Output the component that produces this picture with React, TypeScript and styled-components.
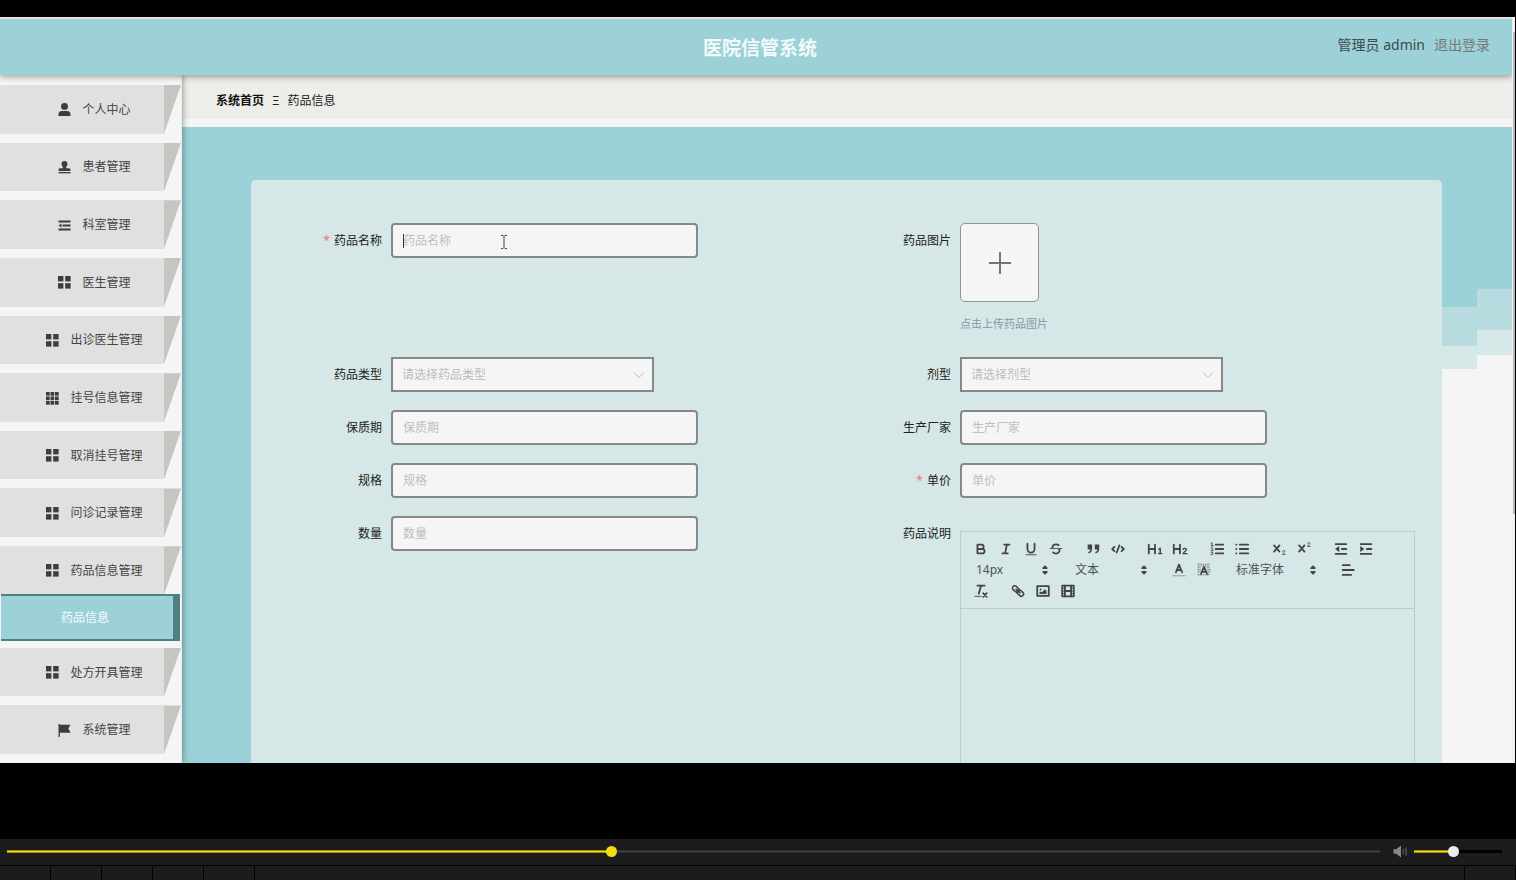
import React from "react";
import styled, { createGlobalStyle } from "styled-components";

const GlobalStyle = createGlobalStyle`
  *, *::before, *::after { box-sizing: border-box; }
  body {
    margin: 0;
    background: #000;
    font-family: "Noto Sans", "Noto Sans CJK SC", sans-serif;
    font-size: 12px;
    line-height: 16px;
    color: #333;
  }
  button, input, select { font: inherit; color: inherit; margin: 0; }
  ul, ol { list-style: none; margin: 0; padding: 0; }
  a { text-decoration: none; }
`;

const Player = styled.div`
  display: flex;
  flex-direction: column;
  height: 100vh;
  padding-top: 17px;
`;

const Screen = styled.div`
  flex: 1;
  min-height: 0;
  display: flex;
  padding-right: 1px;
`;

const Page = styled.div`
  flex: 1;
  min-width: 0;
  display: flex;
  flex-direction: column;
  overflow: hidden;
  background: #f5f5f5;
`;

const ScrollTrack = styled.div`
  width: 3px;
  padding: 15px 0 0 1px;
  background: #f1f1f1;
`;

const ScrollThumb = styled.div`
  height: 66%;
  background: #b9b9b9;
`;

const Header = styled.header`
  position: relative;
  z-index: 2;
  flex: none;
  display: grid;
  grid-template-columns: 1fr auto 1fr;
  height: 58px;
  padding: 0 22px 0 30px;
  border-top: 2px solid #dfe3e3;
  background: #9cd1d7;
  box-shadow: 0 2px 6px rgba(0, 0, 0, 0.35);
`;

const Title = styled.h1`
  grid-column: 2;
  margin: 0;
  font-size: 19px;
  line-height: 58px;
  font-weight: 700;
  color: #f3fafa;
`;

const Account = styled.div`
  display: flex;
  justify-content: flex-end;
  gap: 9px;
  font-size: 14px;
  line-height: 52px;
  color: #3d4a4c;
`;

const Logout = styled.a`
  color: #74797a;
`;

const Body = styled.div`
  flex: 1;
  min-height: 0;
  display: flex;
`;

const Sidebar = styled.nav`
  position: relative;
  z-index: 1;
  flex: none;
  width: 182px;
  background: #f5f5f5;
  border-right: 1px solid #e6eeee;
  box-shadow: 1px 0 6px rgba(0, 0, 0, 0.35);
`;

const Menu = styled.ul`
  display: flex;
  flex-direction: column;
  height: 100%;
  padding-top: 10px;
`;

const MenuSlot = styled.li`
  flex: 1;
  display: flex;
  padding-bottom: 9px;
`;

const MenuLink = styled.a`
  flex: 1;
  display: flex;
  align-items: center;
  justify-content: center;
  gap: 11px;
  padding: 1px 0 0 25px;
  background: #e0e0e0;
  color: #444;

  svg { width: 13px; height: 13px; fill: #3b3d40; }
`;

const Fold = styled.span`
  width: 17px;
  background: #c5c5c1;
  clip-path: polygon(0 0, 100% 0, 0 100%);
`;

const SubSlot = styled.li`
  position: relative;
  flex: none;
  height: 47px;
  margin: -10px 1px 7px;
`;

const SubLink = styled.a`
  display: block;
  border: solid #508085;
  border-width: 2px 7px 2px 0;
  background: #9cd1d7;
  color: #f4fbfb;
  line-height: 43px;
  text-align: center;
  padding-right: 4px;
`;

const Main = styled.main`
  flex: 1;
  min-width: 0;
  display: flex;
  flex-direction: column;
`;

const Crumbs = styled.nav`
  flex: none;
  display: flex;
  align-items: center;
  gap: 8px;
  height: 43px;
  padding: 10px 34px 0;
  background: #edede9;
  border-bottom: 1px solid #e6e6e4;
  color: #222;
`;

const Home = styled.a`
  font-weight: 700;
  color: #111;
`;

const Stage = styled.div`
  flex: 1;
  min-height: 0;
  display: flex;
  margin-top: 9px;
  overflow: hidden;
  background: #9bd1d9;
`;

const Card = styled.form`
  flex: 1;
  min-width: 0;
  margin: 53px 0 0 69px;
  padding: 43px 27px 0 26px;
  border-radius: 5px 5px 0 0;
  background: #d5e7e6;
`;

const Stairs = styled.div`
  flex: none;
  display: flex;
  width: 70px;
`;

const Stair = styled.div<{ $from: number; $mid: number; $to: number }>`
  flex: 1;
  background: linear-gradient(
    #9bd1d9 ${(p) => p.$from}px,
    #b7dbde ${(p) => p.$from}px ${(p) => p.$mid}px,
    #d6e8e7 ${(p) => p.$mid}px ${(p) => p.$to}px,
    #f5f5f5 ${(p) => p.$to}px
  );
`;

const Fields = styled.div`
  display: grid;
  grid-template-columns: 1fr 1fr;
  gap: 18px 0;
`;

const Field = styled.div`
  display: flex;
  align-items: flex-start;
  min-width: 0;
`;

const Label = styled.label<{ $required?: boolean }>`
  flex: none;
  width: 114px;
  padding-right: 9px;
  line-height: 35px;
  text-align: right;
  color: #222;

  &::before {
    content: "${(p) => (p.$required ? "*" : "")}";
    margin-right: 4px;
    color: #f0746e;
  }
`;

const Control = styled.div`
  position: relative;
`;

const TextInput = styled.input`
  display: block;
  width: 307px;
  height: 35px;
  padding: 0 10px 1px;
  border: 2px solid #858888;
  border-radius: 4px;
  outline: none;
  background: #f5f5f5;
  color: #444;

  &::placeholder { color: #bcbfc4; opacity: 1; }
`;

const Select = styled.select`
  display: block;
  width: 263px;
  height: 35px;
  padding: 1px 9px 0;
  border: 2px solid #858888;
  border-radius: 0;
  appearance: none;
  background: #f5f5f5;
  color: #b9bcc2;
`;

const Chevron = styled.svg`
  position: absolute;
  right: 9px;
  top: 12px;
  width: 12px;
  height: 12px;
  fill: none;
  stroke: #b9bcc2;
  pointer-events: none;
`;

const Caret = styled.span`
  position: absolute;
  left: 12px;
  top: 11px;
  width: 1px;
  height: 14px;
  background: #333;
`;

const Pointer = styled.svg`
  position: absolute;
  left: 109px;
  top: 12px;
  width: 8px;
  height: 14px;
  fill: none;
  stroke: #444;
`;

const Upload = styled.div`
  display: flex;
  flex-direction: column;
  gap: 7px;
`;

const UploadButton = styled.button`
  display: grid;
  place-items: center;
  width: 79px;
  height: 79px;
  padding: 0;
  border: 1px solid #8f9494;
  border-radius: 5px;
  background: #f5f5f5;

  svg { width: 24px; height: 24px; stroke: #6f777b; stroke-width: 2; }
`;

const Hint = styled.div`
  font-size: 11px;
  line-height: 30px;
  color: #8499a8;
`;

const Editor = styled.div`
  flex: 1;
  min-width: 0;
  margin-top: 15px;
  border: 1px solid #bfcccb;
`;

const Toolbar = styled.div`
  display: flex;
  flex-wrap: wrap;
  gap: 0 12px;
  padding: 6px 24px 7px 7px;
  border-bottom: 1px solid #bfcccb;
`;

const Group = styled.span`
  display: flex;
`;

const ToolButton = styled.button`
  display: grid;
  place-items: center;
  width: 25px;
  height: 21px;
  padding: 0;
  border: 0;
  background: none;

  svg {
    width: 16px;
    height: 16px;
    fill: none;
    stroke: #444;
    stroke-width: 2;
    stroke-linecap: round;
    stroke-linejoin: round;
  }
  .f { fill: #444; stroke: none; }
  .t { stroke-width: 1; }
  .e { fill: #444; stroke: none; fill-rule: evenodd; }
`;

const Picker = styled.span<{ $wide?: boolean }>`
  position: relative;
  width: ${(p) => (p.$wide ? 95 : 87)}px;

  select {
    display: block;
    width: 100%;
    height: 21px;
    padding: 0 8px;
    border: 0;
    appearance: none;
    background: none;
    color: #4c5354;
  }
  svg {
    position: absolute;
    right: 2px;
    top: 3px;
    width: 16px;
    height: 16px;
    fill: #444;
    stroke: #444;
    stroke-width: 2;
    stroke-linejoin: round;
    pointer-events: none;
  }
`;

const EditArea = styled.div`
  height: 300px;
`;

const Controls = styled.footer`
  flex: none;
  margin-top: 76px;
  background: #1c1c1c;
`;

const SeekRow = styled.div`
  display: flex;
  align-items: center;
  height: 27px;
  padding: 0 14px 1px 7px;
  border-bottom: 1px solid #000;
`;

const Slider = styled.input<{ $thumb: string; $rest: string; $fill: number }>`
  appearance: none;
  display: block;
  height: 11px;
  margin: 0;
  background: none;

  &::-webkit-slider-runnable-track {
    height: 3px;
    background:
      linear-gradient(#a38f0a 1px, #f5dc14 1px 2px, #a38f0a 2px) 0 0 / ${(p) => p.$fill}% 100% no-repeat,
      ${(p) => p.$rest};
  }
  &::-webkit-slider-thumb {
    appearance: none;
    width: 11px;
    height: 11px;
    margin-top: -4px;
    border-radius: 50%;
    background: ${(p) => p.$thumb};
  }
`;

const Seek = styled(Slider)`
  flex: 1;
  min-width: 0;
`;

const Volume = styled(Slider)`
  width: 88px;
`;

const Mute = styled.button`
  display: flex;
  margin: 0 6px 0 13px;
  padding: 0;
  border: 0;
  background: none;

  svg { width: 15px; height: 13px; }
`;

const Strip = styled.div`
  display: flex;
  height: 14px;
`;

const Cell = styled.span`
  width: 51px;
  border-right: 1px solid #000;

  &:last-child {
    margin-left: auto;
    border-left: 1px solid #000;
    width: 52px;
  }
`;

type IconName = "user" | "stamp" | "fold" | "four" | "nine" | "flag";

const cells = (n: number, size: number, step: number) =>
  Array.from({ length: n * n }, (_, i) => (
    <rect key={i} x={(i % n) * step} y={Math.floor(i / n) * step} width={size} height={size} />
  ));

const menuIcons: Record<IconName, React.ReactNode> = {
  user: (
    <>
      <ellipse cx="6.5" cy="3.4" rx="3.5" ry="3.4" />
      <path d="M.5 13v-1.800C.5 9 2 8 4 8h5c2 0 3.500 1 3.500 3.200V13z" />
    </>
  ),
  stamp: (
    <>
      <path d="M6.500 0a3 3 0 0 1 3 3c0 1.800-1.400 2.300-1.400 4.200H11a1.500 1.500 0 0 1 1.500 1.500V10H.5V8.700A1.500 1.500 0 0 1 2 7.200h2.900C4.900 5.300 3.500 4.800 3.500 3a3 3 0 0 1 3-3z" />
      <rect x=".5" y="11" width="12" height="1.300" />
    </>
  ),
  fold: (
    <path d="M.5 1.500h12v2H.5zM4.500 5.500h8v2h-8zM.5 9.500h12v2H.5zM3.500 4.500v4l-3-2z" />
  ),
  four: cells(2, 5.4, 7.2),
  nine: cells(3, 3.7, 4.5),
  flag: <path d="M.5 0h1.300v.8h10.700L10.400 4.500l2.100 4.200H1.800V13H.5z" />,
};

const MenuIcon = ({ name }: { name: IconName }) => (
  <svg viewBox="0 0 13 13" aria-hidden="true">{menuIcons[name]}</svg>
);

const menu: { icon: IconName; text: string; child?: string }[] = [
  { icon: "user", text: "个人中心" },
  { icon: "stamp", text: "患者管理" },
  { icon: "fold", text: "科室管理" },
  { icon: "four", text: "医生管理" },
  { icon: "four", text: "出诊医生管理" },
  { icon: "nine", text: "挂号信息管理" },
  { icon: "four", text: "取消挂号管理" },
  { icon: "four", text: "问诊记录管理" },
  { icon: "four", text: "药品信息管理", child: "药品信息" },
  { icon: "four", text: "处方开具管理" },
  { icon: "flag", text: "系统管理" },
];

const tools: Record<string, React.ReactNode> = {
  加粗: <path d="M5 4h4.500A2.500 2.500 0 0 1 12 6.500 2.500 2.500 0 0 1 9.500 9H5zM5 9h5.500a2.500 2.500 0 0 1 0 5H5z" />,
  斜体: <path d="M7 4h6M5 14h6M8 14l2-10" />,
  下划线: (
    <>
      <path d="M5 3v6a4 4 0 0 0 8 0V3" />
      <rect className="f" x="3" y="15" width="12" height="1" />
    </>
  ),
  删除线: (
    <>
      <path className="t" d="M2.500 8.500h13" />
      <path
        className="f"
        d="M6.400 8A1.500 1.500 0 0 1 6 7c0-1.500 1.300-2.300 3-2.300 1 0 1.900.3 2.500.8a1 1 0 0 0 1.400-1.400C11.900 3.200 10.600 2.700 9 2.700 6.200 2.700 4 4.400 4 7c0 .4 0 .7.1 1zM11.500 9c.3.4.5.9.5 1.500 0 1.600-1.300 2.600-3 2.600-1.100 0-2-.4-2.600-1a1 1 0 0 0-1.400 1.400c1 1 2.400 1.600 4 1.600 2.800 0 5-1.800 5-4.600 0-.6-.1-1.100-.3-1.500z"
      />
    </>
  ),
  引用: (
    <path
      className="f"
      d="M3 4h5v5c0 2.500-1.500 4.500-4 5l-.5-1.500C5 12 5.800 11 6 9.500H3zM11 4h5v5c0 2.500-1.500 4.500-4 5l-.5-1.500c1.500-.5 2.300-1.500 2.500-3h-3z"
    />
  ),
  代码: <path d="M5 6.500L2.500 9 5 11.500M13 6.500L15.500 9 13 11.500M10.500 5l-3 8" />,
  一级标题: (
    <>
      <path d="M2 4v10M9 4v10M2 9h7" />
      <path className="e" d="M14 7.500h1.700v6h1.500V15h-4.700v-1.500H14V9.600l-1.300.4V8.500z" />
    </>
  ),
  二级标题: (
    <>
      <path d="M2 4v10M9 4v10M2 9h7" />
      <path d="M12.500 9.300c.3-1.300 3.800-1.500 3.800.4 0 1.500-3.600 2.800-3.800 4.500h4.500" strokeWidth="1.500" />
    </>
  ),
  有序列表: (
    <>
      <path d="M7.500 4H16M7.500 9H16M7.500 14H16" />
      <path className="t" d="M2.500 2.500l1-.5v3.500M2.300 5.500h2.400M2.300 7.800c2-1 2.800.5.2 2.700h2.200M2.300 12.500h2l-1 1.300c2 0 1.500 2.200-1.200 1.700" />
    </>
  ),
  无序列表: <path d="M6.500 4H16M6.500 9H16M6.500 14H16M2.500 4h.2M2.500 9h.2M2.500 14h.2" />,
  下标: (
    <>
      <path d="M3.500 5l6 7M9.500 5l-6 7" />
      <path className="t" d="M13 11.500c.3-1.300 2.800-1 2.500.4-.2 1-2.200 1.900-2.500 3.100h3" />
    </>
  ),
  上标: (
    <>
      <path d="M3.500 5l6 7M9.500 5l-6 7" />
      <path className="t" d="M13 2.500c.3-1.300 2.800-1 2.500.4C15.300 3.900 13.300 4.800 13 6h3" />
    </>
  ),
  减少缩进: (
    <>
      <path d="M3 3.500h12M3 14.500h12M10 9h5" />
      <path className="f" d="M7 5.500v7L2.300 9z" />
    </>
  ),
  增加缩进: (
    <>
      <path d="M3 3.500h12M3 14.500h12M10 9h5" />
      <path className="f" d="M2.500 5.500v7L7.200 9z" />
    </>
  ),
  文字颜色: (
    <>
      <path d="M5.500 11.500L9 3l3.500 8.500M6.800 9h4.400" />
      <path d="M2 15.500h14" style={{ strokeWidth: 1, stroke: "#899796" }} />
    </>
  ),
  背景颜色: (
    <>
      <path
        d="M2 2.500h14M2 4.500h14M2 6.500h4M12 6.500h4M2 8.500h3M13 8.500h3M2 10.500h3M13 10.500h3M2 12.500h2M14 12.500h2M2 14.500h14"
        style={{ strokeWidth: 1, strokeDasharray: "1 1", strokeLinecap: "butt" }}
      />
      <path d="M5.500 13.500L9 5.500l3.500 8M6.800 11h4.400" />
    </>
  ),
  对齐: <path d="M3 3.500h8M3 9h12.500M3 14.500h9.500" />,
  清除格式: (
    <>
      <path d="M5 3h8M9 3L6.500 12" />
      <path className="t" d="M2 15h7" />
      <path d="M11.500 11.500l4 4M15.500 11.500l-4 4" />
    </>
  ),
  链接: (
    <g transform="rotate(42 9 9)" strokeWidth="1.700">
      <rect x="1.500" y="6.500" width="8.500" height="5" rx="2.500" />
      <rect x="8" y="6.500" width="8.500" height="5" rx="2.500" />
      <path d="M6 9h6" />
    </g>
  ),
  图片: (
    <>
      <rect x="2.500" y="3.500" width="13" height="11" />
      <circle className="f" cx="6.300" cy="7.200" r="1.100" />
      <path className="f" d="M5 12.500v-2l1.500-1 1.500 1L11 7l2 2v3.500z" />
    </>
  ),
  视频: (
    <>
      <rect x="2.500" y="3" width="13" height="12" />
      <path d="M5.500 3v12M12.500 3v12M5.500 9h7" />
      <path className="t" d="M3 6h3M3 9h3M3 12h3M12 6h3M12 9h3M12 12h3" />
    </>
  ),
};

const Tools = ({ names }: { names: string[] }) => (
  <Group>
    {names.map((n) => (
      <ToolButton key={n} type="button" aria-label={n}>
        <svg viewBox="0 0 18 18">{tools[n]}</svg>
      </ToolButton>
    ))}
  </Group>
);

const ToolPicker = ({ name, value, wide }: { name: string; value: string; wide?: boolean }) => (
  <Picker $wide={wide}>
    <select aria-label={name}>
      <option>{value}</option>
    </select>
    <svg viewBox="0 0 18 18" aria-hidden="true">
      <path d="M7 7l2-2 2 2zM7 11l2 2 2-2z" />
    </svg>
  </Picker>
);

const InputField = ({
  id, label, required, children,
}: { id: string; label: string; required?: boolean; children?: React.ReactNode }) => (
  <Field>
    <Label htmlFor={id} $required={required}>{label}</Label>
    <Control>
      <TextInput id={id} placeholder={label} />
      {children}
    </Control>
  </Field>
);

const SelectField = ({ id, label }: { id: string; label: string }) => (
  <Field>
    <Label htmlFor={id}>{label}</Label>
    <Control>
      <Select id={id}>
        <option>{`请选择${label}`}</option>
      </Select>
      <Chevron viewBox="0 0 12 12"><path d="M1 3.500l5 5 5-5" /></Chevron>
    </Control>
  </Field>
);

export default function App() {
  return (
    <Player>
      <GlobalStyle />
      <Screen>
        <Page>
          <Header>
            <Title>医院信管系统</Title>
            <Account>
              <span>管理员 admin</span>
              <Logout href="#logout">退出登录</Logout>
            </Account>
          </Header>
          <Body>
            <Sidebar>
              <Menu>
                {menu.map((m) => (
                  <React.Fragment key={m.text}>
                    <MenuSlot>
                      <MenuLink href="#menu">
                        <MenuIcon name={m.icon} />
                        {m.text}
                      </MenuLink>
                      <Fold />
                    </MenuSlot>
                    {m.child && (
                      <SubSlot>
                        <SubLink href="#drug">{m.child}</SubLink>
                      </SubSlot>
                    )}
                  </React.Fragment>
                ))}
              </Menu>
            </Sidebar>
            <Main>
              <Crumbs>
                <Home href="#home">系统首页</Home>
                <span>Ξ</span>
                <span>药品信息</span>
              </Crumbs>
              <Stage>
                <Card>
                  <Fields>
                    <InputField id="name" label="药品名称" required>
                      <Caret />
                      <Pointer viewBox="0 0 8 14">
                        <path d="M1 .5h2l1 1 1-1h2M4 1.500v11M1 13.500h2l1-1 1 1h2" />
                      </Pointer>
                    </InputField>
                    <Field>
                      <Label htmlFor="photo">药品图片</Label>
                      <Upload>
                        <UploadButton id="photo" type="button" aria-label="药品图片">
                          <svg viewBox="0 0 24 24"><path d="M12 1v22M1 12h22" /></svg>
                        </UploadButton>
                        <Hint>点击上传药品图片</Hint>
                      </Upload>
                    </Field>
                    <SelectField id="type" label="药品类型" />
                    <SelectField id="form" label="剂型" />
                    <InputField id="shelf" label="保质期" />
                    <InputField id="maker" label="生产厂家" />
                    <InputField id="spec" label="规格" />
                    <InputField id="price" label="单价" required />
                    <InputField id="count" label="数量" />
                    <Field>
                      <Label as="span" id="desc">药品说明</Label>
                      <Editor>
                        <Toolbar>
                          <Tools names={["加粗", "斜体", "下划线", "删除线"]} />
                          <Tools names={["引用", "代码"]} />
                          <Tools names={["一级标题", "二级标题"]} />
                          <Tools names={["有序列表", "无序列表"]} />
                          <Tools names={["下标", "上标"]} />
                          <Tools names={["减少缩进", "增加缩进"]} />
                          <ToolPicker name="字号" value="14px" />
                          <ToolPicker name="标题" value="文本" />
                          <Tools names={["文字颜色", "背景颜色"]} />
                          <ToolPicker name="字体" value="标准字体" wide />
                          <Tools names={["对齐"]} />
                          <Tools names={["清除格式"]} />
                          <Tools names={["链接", "图片", "视频"]} />
                        </Toolbar>
                        <EditArea role="textbox" aria-labelledby="desc" contentEditable suppressContentEditableWarning />
                      </Editor>
                    </Field>
                  </Fields>
                </Card>
                <Stairs>
                  <Stair $from={180} $mid={219} $to={242} />
                  <Stair $from={162} $mid={203} $to={228} />
                </Stairs>
              </Stage>
            </Main>
          </Body>
        </Page>
        <ScrollTrack>
          <ScrollThumb />
        </ScrollTrack>
      </Screen>
      <Controls>
        <SeekRow>
          <Seek
            type="range" aria-label="进度" max={1000} defaultValue={440}
            $fill={44} $thumb="#f5dc14"
            $rest="linear-gradient(#2c2c2c 1px, #444 1px 2px, #2c2c2c 2px)"
          />
          <Mute type="button" aria-label="静音">
            <svg viewBox="0 0 15 14">
              <path d="M0 4.500h3L8 .5v13L3 9.500H0z" fill="#8a8a8a" />
              <path d="M10.500 4v6" stroke="#666" />
              <path d="M13.500 2.500v9" stroke="#777" />
            </svg>
          </Mute>
          <Volume
            type="range" aria-label="音量" defaultValue={44}
            $fill={44} $thumb="#ececec" $rest="#000"
          />
        </SeekRow>
        <Strip>
          <Cell /><Cell /><Cell /><Cell /><Cell /><Cell />
        </Strip>
      </Controls>
    </Player>
  );
}
